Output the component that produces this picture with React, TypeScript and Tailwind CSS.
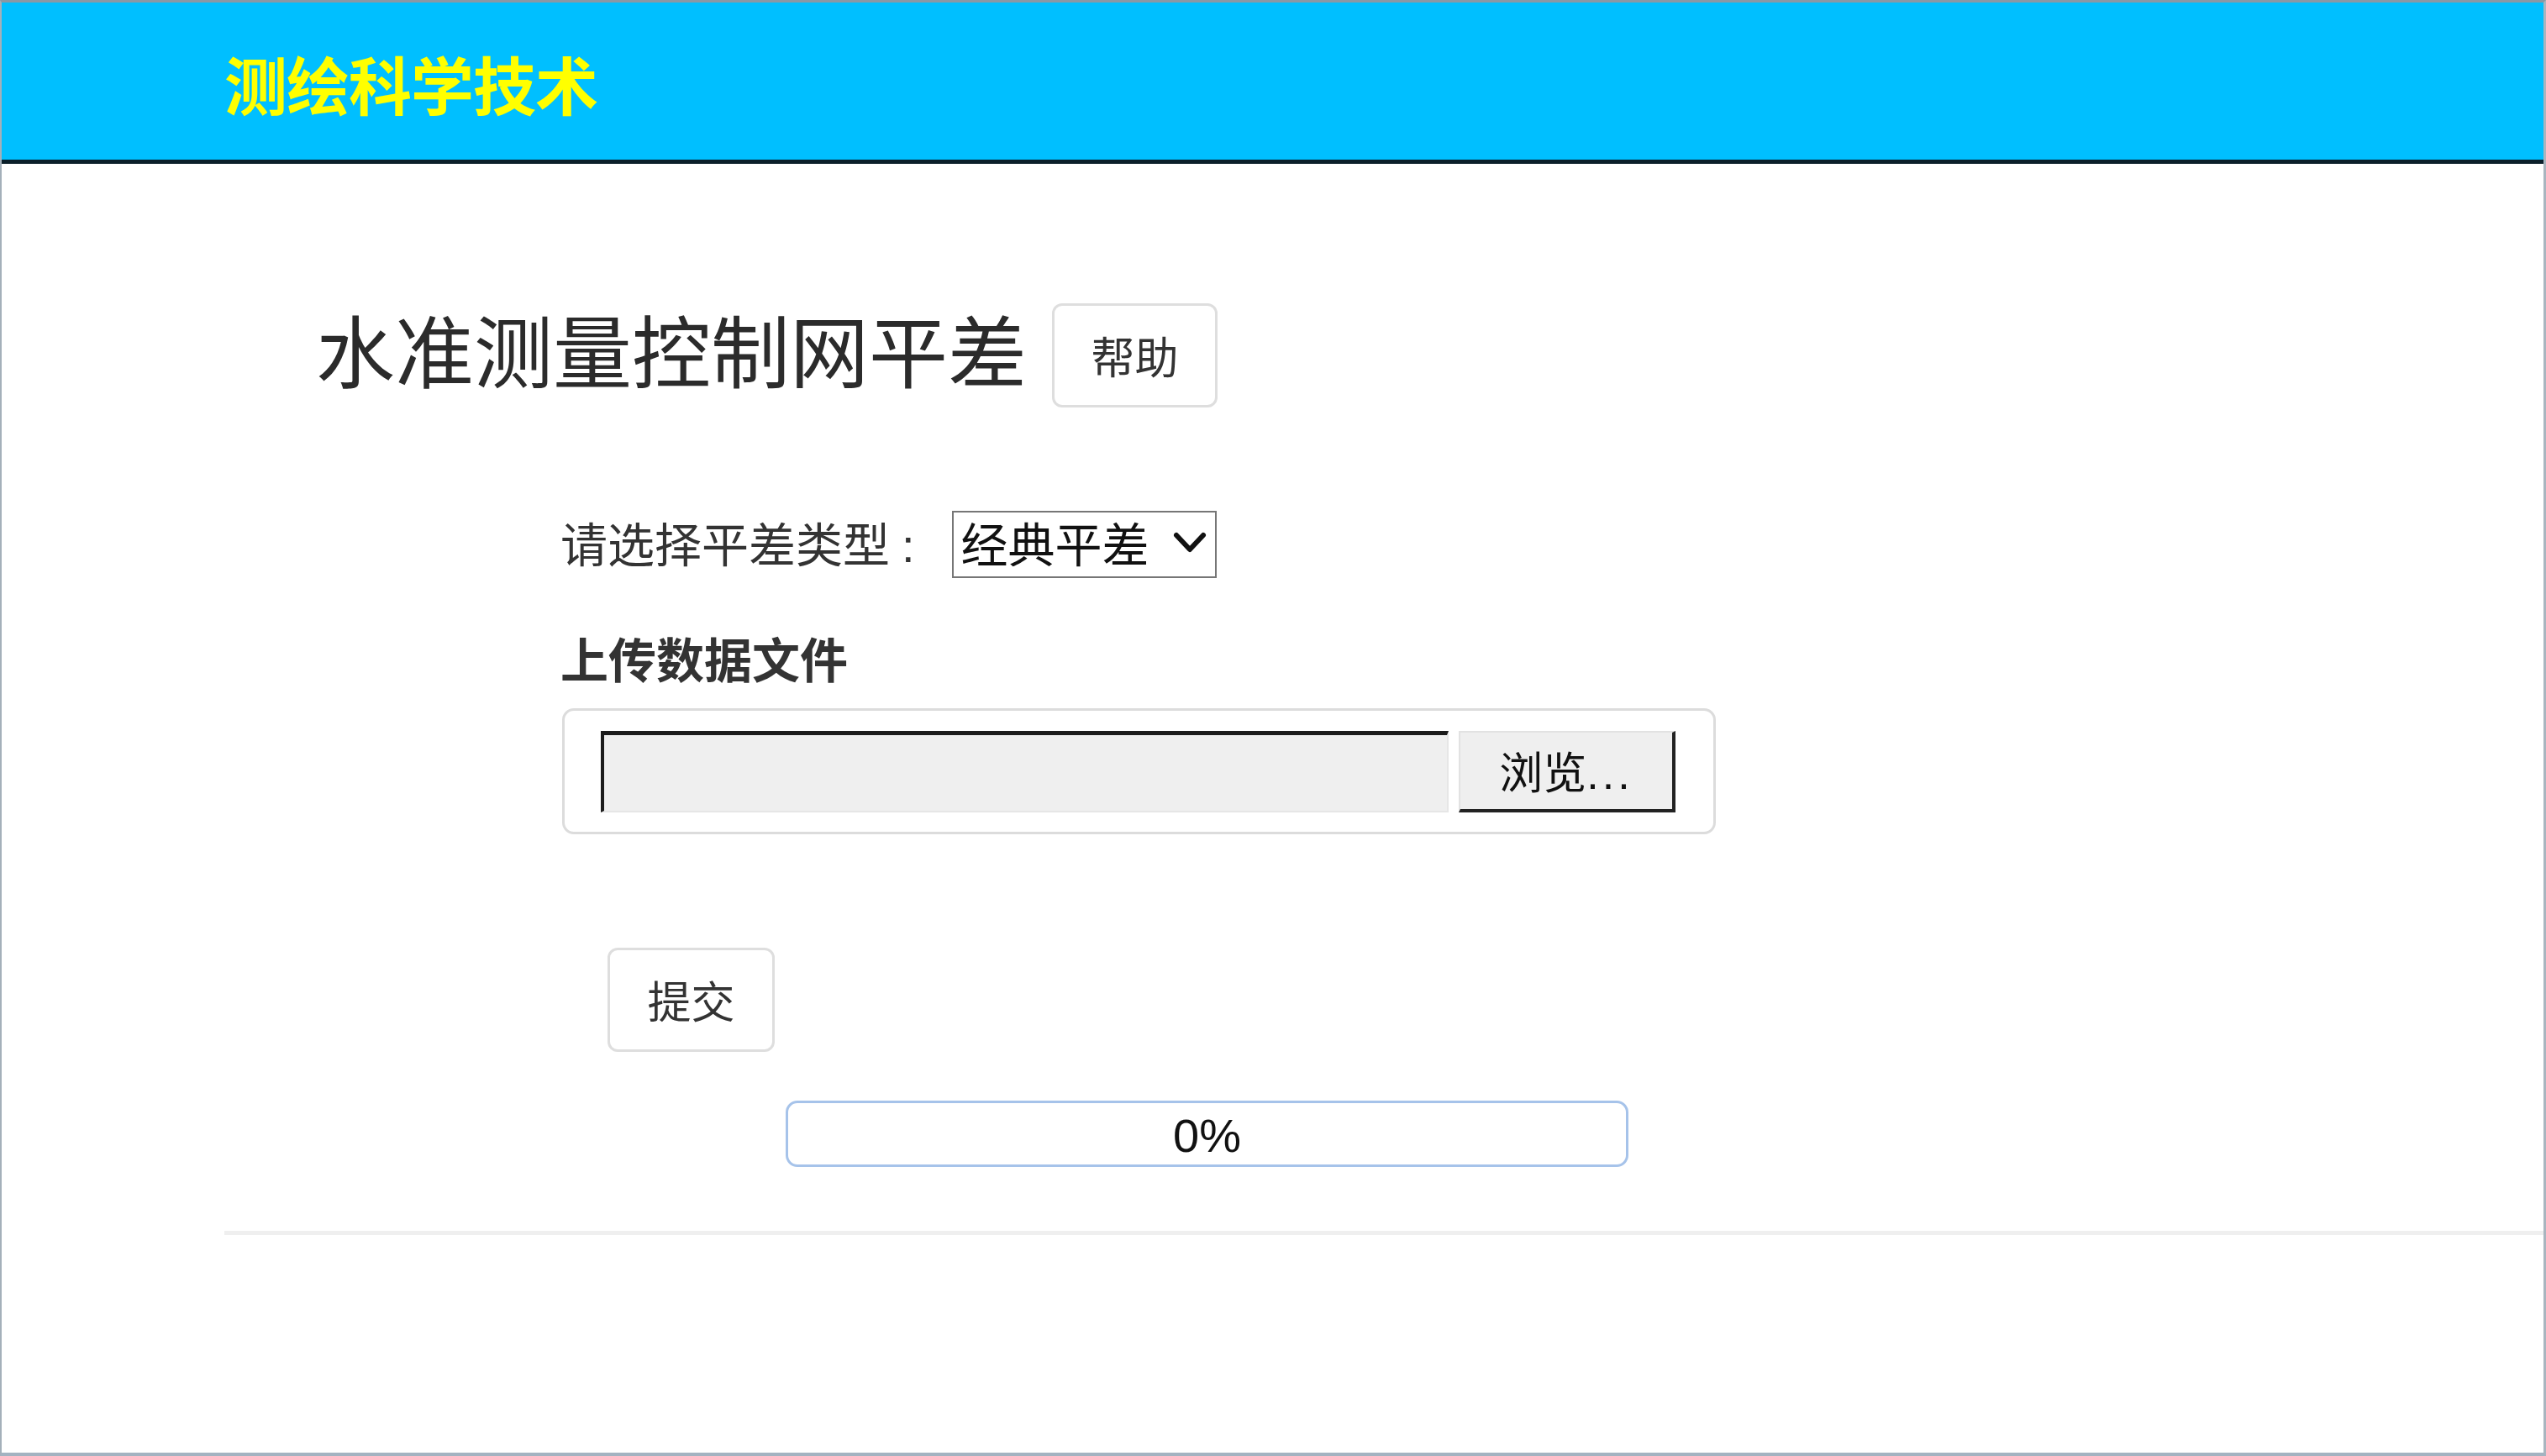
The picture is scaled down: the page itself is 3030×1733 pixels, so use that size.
import React from "react";

const cjk = "font-['Liberation_Sans','Noto_Sans_CJK_SC',sans-serif]";

export default function App() {
  return (
    <div
      className={`w-[3030px] h-[1733px] bg-white flex flex-col overflow-hidden border-t-[3px] border-t-[#8a98a4] border-l-2 border-l-[#a4b0ba] border-r-[3px] border-r-[#a9b5bf] border-b-[4px] border-b-[#a3b3c1] text-[#333] ${cjk}`}
    >
      {/* Top bar */}
      <header className="h-[192px] shrink-0 bg-[#00bfff] border-b-[5px] border-b-[#0b1f2a] flex items-center pl-[265px] pt-[18px]">
        <h1 className="text-[75px] font-bold text-[#ffff00] leading-none tracking-[-1px]">
          测绘科学技术
        </h1>
      </header>

      <main className="flex flex-col">
        {/* Title + help */}
        <div className="ml-[374px] mt-[166px] flex items-center gap-[30px]">
          <h2 className="text-[94px] leading-[124px] font-normal text-[#2b2b2b]">
            水准测量控制网平差
          </h2>
          <button className="w-[197px] h-[124px] bg-white border-[3px] border-[#dedede] rounded-[12px] text-[52px] text-[#333] leading-none pt-[8px]">
            帮助
          </button>
        </div>

        {/* Adjustment type */}
        <div className="ml-[665px] mt-[123px] flex items-center h-[80px]">
          <span className="text-[56px] leading-none text-[#333] pt-[4px]">请选择平差类型</span>
          <span className="text-[56px] leading-none text-[#333] ml-[14px] font-['Liberation_Sans',sans-serif] pt-[4px]">:</span>
          <div className="ml-[44px] w-[315px] h-[80px] border-2 border-[#767676] flex items-center pl-[9px] pr-[10px] justify-between bg-white">
            <span className="text-[56px] leading-none text-[#111] pt-[4px]">经典平差</span>
            <svg width="40" height="28" viewBox="0 0 40 28" className="mb-[4px]">
              <polyline
                points="4,5 20,22 36,5"
                fill="none"
                stroke="#111"
                strokeWidth="6"
                strokeLinecap="round"
                strokeLinejoin="round"
              />
            </svg>
          </div>
        </div>

        {/* Upload */}
        <div className="ml-[665px] mt-[64px] text-[57px] font-bold leading-[70px] text-[#333]">
          上传数据文件
        </div>
        <div className="ml-[667px] mt-[21px] w-[1373px] h-[150px] border-[3px] border-[#dcdcdc] rounded-[14px] pl-[43px] pt-[24px]">
          <div className="flex gap-[12px]">
            <div className="w-[1009px] h-[97px] bg-[#efefef] border-t-[5px] border-l-[4px] border-t-[#1c1c1c] border-l-[#1c1c1c] border-r-2 border-b-2 border-r-[#e6e6e6] border-b-[#e6e6e6]" />
            <button className="w-[258px] h-[97px] bg-[#efefef] border-t-2 border-l-2 border-t-[#e2e2e2] border-l-[#e2e2e2] border-r-[4px] border-b-[4px] border-r-[#222] border-b-[#222] text-[52px] leading-none text-[#111] pt-[6px]">
              浏览<span className="tracking-[4px]">...</span>
            </button>
          </div>
        </div>

        {/* Submit */}
        <div className="ml-[721px] mt-[135px]">
          <button className="w-[199px] h-[124px] bg-white border-[3px] border-[#dedede] rounded-[12px] text-[52px] text-[#333] leading-none pt-[8px]">
            提交
          </button>
        </div>

        {/* Progress */}
        <div className="ml-[933px] mt-[58px] w-[1003px] h-[79px] border-[3px] border-[#a6c3ea] rounded-[14px] flex items-center justify-center">
          <span className="text-[56px] leading-none text-[#111] pt-[4px]">0%</span>
        </div>

        <div className="ml-[265px] mt-[76px] h-[5px] bg-[#efefef]" />
      </main>
    </div>
  );
}
